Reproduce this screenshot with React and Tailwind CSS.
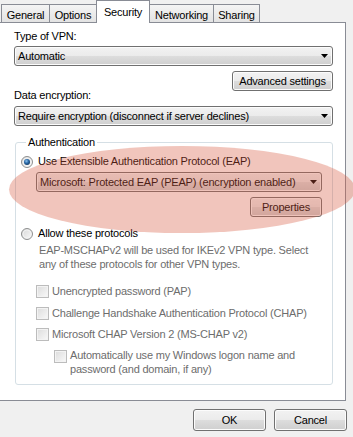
const face =
  "rounded-[3px] border border-[#707070] bg-[linear-gradient(#f2f2f2_0%,#ebebeb_50%,#dddddd_50%,#cfcfcf_100%)] shadow-[inset_0_0_0_1px_#fcfcfc]";

function Combo({ children, className = "" }) {
  return (
    <div className={`${face} h-[20px] flex items-center pl-[3px] pr-[4px] ${className}`}>
      <span className="flex-1 whitespace-nowrap">{children}</span>
      <svg width="7" height="4" viewBox="0 0 7 4">
        <path d="M0 0h7L3.5 4z" fill="#000" />
      </svg>
    </div>
  );
}

function Button({ children, className = "" }) {
  return (
    <div className={`${face} flex items-center justify-center ${className}`}>
      {children}
    </div>
  );
}

function Radio({ id, checked }) {
  return (
    <svg width="12" height="12" viewBox="0 0 12 12" className="shrink-0">
      <defs>
        <linearGradient id={`${id}-bg`} x1="0" y1="0" x2="1" y2="1">
          <stop offset="0" stopColor="#d6d6d6" />
          <stop offset="1" stopColor="#fbfbfb" />
        </linearGradient>
        <radialGradient id={`${id}-dot`} cx="0.4" cy="0.35" r="0.7">
          <stop offset="0" stopColor="#8fc4f0" />
          <stop offset="0.5" stopColor="#2b6aa8" />
          <stop offset="1" stopColor="#123a63" />
        </radialGradient>
      </defs>
      <circle cx="6" cy="6" r="5.5" fill={`url(#${id}-bg)`} stroke="#8e8f8f" />
      <circle cx="6" cy="6" r="4" fill="none" stroke="#f4f4f4" strokeWidth="0.8" />
      {checked && <circle cx="6" cy="6" r="3" fill={`url(#${id}-dot)`} />}
    </svg>
  );
}

function Check({ className = "" }) {
  return (
    <div
      className={`w-[13px] h-[13px] shrink-0 border border-[#bcbcbc] bg-[linear-gradient(135deg,#dcdcdc,#f9f9f9)] shadow-[inset_0_0_0_1px_#f3f3f3] ${className}`}
    />
  );
}

const tabBase = "-ml-px border border-b-0 border-[#898c95] text-center whitespace-nowrap";
const tabIdle = `${tabBase} h-[18px] pt-[4px] bg-[linear-gradient(#f4f4f4,#e3e3e3)]`;

export default function App() {
  return (
    <div className="relative w-[353px] h-[437px] overflow-hidden bg-[#f0f0f0] font-['Liberation_Sans',Arial,sans-serif] text-[11px] leading-[13px] tracking-[-0.2px] text-black">
      <div className="relative z-10 flex items-end h-[22px] pl-[2px]">
        <div className={`${tabIdle} w-[49px]`}>General</div>
        <div className={`${tabIdle} w-[48px]`}>Options</div>
        <div className={`${tabBase} w-[54px] h-[23px] -mb-px pt-[5px] bg-white relative z-10`}>
          Security
        </div>
        <div className={`${tabIdle} w-[65px]`}>Networking</div>
        <div className={`${tabIdle} w-[47px]`}>Sharing</div>
      </div>

      <div className="w-[346px] h-[379px] bg-white border border-l-0 border-[#898c95] pl-[14px] pr-[12px] flex flex-col">
        <div className="mt-[7px]">Type of VPN:</div>
        <Combo className="mt-[3px]">Automatic</Combo>
        <Button className="mt-[5px] self-end w-[101px] h-[20px]">Advanced settings</Button>
        <div className="-mt-[2px]">Data encryption:</div>
        <Combo className="mt-[4px]">Require encryption (disconnect if server declines)</Combo>

        <fieldset className="mt-[10px] ml-[1px] border border-[#d5dfe5] rounded-[3px] pl-[5px] pr-[10px] pb-[8px]">
          <legend className="ml-[5px] px-[2px]">Authentication</legend>
          <div className="flex flex-col">
            <div className="mt-[6px] flex items-center gap-[5px]">
              <Radio id="eap" checked />
              <span>Use Extensible Authentication Protocol (EAP)</span>
            </div>
            <Combo className="mt-[4px] ml-[15px]">
              Microsoft: Protected EAP (PEAP) (encryption enabled)
            </Combo>
            <Button className="mt-[5px] self-end w-[72px] h-[20px]">Properties</Button>
            <div className="mt-[10px] flex items-center gap-[5px]">
              <Radio id="allow" />
              <span>Allow these protocols</span>
            </div>
            <div className="mt-[3px] ml-[18px] leading-[14px] text-[#6d6d6d] whitespace-nowrap">
              EAP-MSCHAPv2 will be used for IKEv2 VPN type. Select
              <br />
              any of these protocols for other VPN types.
            </div>
            <div className="mt-[14px] ml-[15px] flex items-center gap-[3px] text-[#6d6d6d]">
              <Check />
              <span>Unencrypted password (PAP)</span>
            </div>
            <div className="mt-[9px] ml-[15px] flex items-center gap-[3px] text-[#6d6d6d]">
              <Check />
              <span>Challenge Handshake Authentication Protocol (CHAP)</span>
            </div>
            <div className="mt-[8px] ml-[15px] flex items-center gap-[3px] text-[#6d6d6d]">
              <Check />
              <span>Microsoft CHAP Version 2 (MS-CHAP v2)</span>
            </div>
            <div className="mt-[7px] ml-[33px] flex items-start gap-[3px] text-[#6d6d6d]">
              <Check className="mt-[2px]" />
              <span className="leading-[14px]">
                Automatically use my Windows logon name and
                <br />
                password (and domain, if any)
              </span>
            </div>
          </div>
        </fieldset>
      </div>

      <div className="mt-[8px] pr-[6px] flex justify-end gap-[8px]">
        <Button className="w-[73px] h-[22px]">OK</Button>
        <Button className="w-[73px] h-[22px]">Cancel</Button>
      </div>

      <div className="pointer-events-none absolute left-[9px] top-[146px] w-[346px] h-[87px] rounded-[50%] bg-[rgba(214,90,64,0.35)]" />
    </div>
  );
}
